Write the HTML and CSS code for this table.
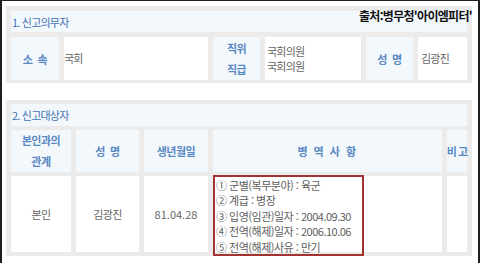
FILE: index.html
```html
<!DOCTYPE html>
<html lang="ko">
<head>
<meta charset="utf-8">
<link rel="stylesheet" href="styles.css">
</head>
<body>
<div class="frame">
  <div class="box box1">
    <div class="title">1. 신고의무자</div>
    <div class="lbl">소&nbsp;&nbsp;속</div>
    <div class="val val0">국회</div>
    <div class="lbl lbl2">직위<br>직급</div>
    <div class="val val2">국회의원<br>국회의원</div>
    <div class="lbl">성&nbsp;&nbsp;명</div>
    <div class="val">김광진</div>
    <div class="source">출처:병무청'아이엠피터'</div>
  </div>
  <div class="box box2">
    <div class="title">2. 신고대상자</div>
    <div class="lbl lbl2">본인과의<br>관계</div>
    <div class="lbl">성&nbsp;&nbsp;명</div>
    <div class="lbl">생년월일</div>
    <div class="lbl spaced">병 역 사 항</div>
    <div class="lbl narrow">비 고</div>
    <div class="cell">본인</div>
    <div class="cell">김광진</div>
    <div class="cell num">81.04.28</div>
    <div class="cell svc">
      <div class="hl">
        <div>① 군별(복무분야) : 육군</div>
        <div>② 계급 : 병장</div>
        <div>③ 입영(임관)일자 : 2004.09.30</div>
        <div>④ 전역(해제)일자 : 2006.10.06</div>
        <div>⑤ 전역(해제)사유 : 만기</div>
      </div>
    </div>
    <div class="cell"></div>
  </div>
</div>
</body>
</html>
```

FILE: styles.css
```css
html, body {
  margin: 0;
  padding: 0;
  background: #fff;
}
body {
  font-family: "Noto Sans CJK KR", "Noto Sans", sans-serif;
  font-size: 11px;
  color: #666;
}
.frame {
  width: 480px;
  height: 263px;
  box-sizing: border-box;
  border-top: 1px solid #1e1e1e;
  border-left: 2px solid #1e1e1e;
  border-right: 2px solid #1e1e1e;
  padding: 5px 6px 0 4px;
  overflow: hidden;
}
.box {
  background: #ebebeb;
  display: grid;
  position: relative;
}
.box1 {
  padding: 5px 5px 3px;
  grid-template-columns: 48px 144px 47px 96px 47px 49px;
  grid-template-rows: 21px 43px;
  gap: 5px;
}
.box2 {
  margin-top: 17px;
  padding: 4px 5px;
  grid-template-columns: 60px 63px 64px 229px 20px;
  grid-template-rows: 22px 42px 76px;
  row-gap: 4px;
  column-gap: 5px;
}
.title {
  grid-column: 1 / -1;
  background: #f3f8fd;
  color: #3f72b3;
  font-size: 11px;
  letter-spacing: -0.8px;
  display: flex;
  align-items: center;
  padding-left: 1px;
}
.lbl {
  background: #f3f8fd;
  color: #5a88c2;
  font-weight: 700;
  display: flex;
  align-items: center;
  justify-content: center;
  text-align: center;
  letter-spacing: -0.5px;
  white-space: nowrap;
}
.lbl2 {
  line-height: 21px;
}
.spaced {
  letter-spacing: 1.5px;
}
.narrow {
  letter-spacing: -1px;
}
.val {
  background: #fff;
  display: flex;
  align-items: center;
  padding-left: 3px;
  letter-spacing: -0.8px;
  line-height: 15px;
}
.val0 {
  padding-left: 0;
}
.val2 {
  padding-left: 2px;
}
.cell {
  background: #fff;
  display: flex;
  align-items: center;
  justify-content: center;
  letter-spacing: -0.6px;
}
.num {
  letter-spacing: 0;
}
.svc {
  align-items: flex-start;
  justify-content: flex-start;
}
.hl {
  box-sizing: border-box;
  width: 151px;
  height: 81px;
  margin-top: -1px;
  border: 2px solid #a13330;
  padding: 1px 0 0 1px;
  line-height: 15.4px;
  letter-spacing: -0.5px;
  white-space: nowrap;
  color: #5e5e5e;
}
.source {
  position: absolute;
  top: 1px;
  right: 0;
  font-weight: 700;
  color: #111;
  font-size: 12px;
  letter-spacing: -0.7px;
}
```
